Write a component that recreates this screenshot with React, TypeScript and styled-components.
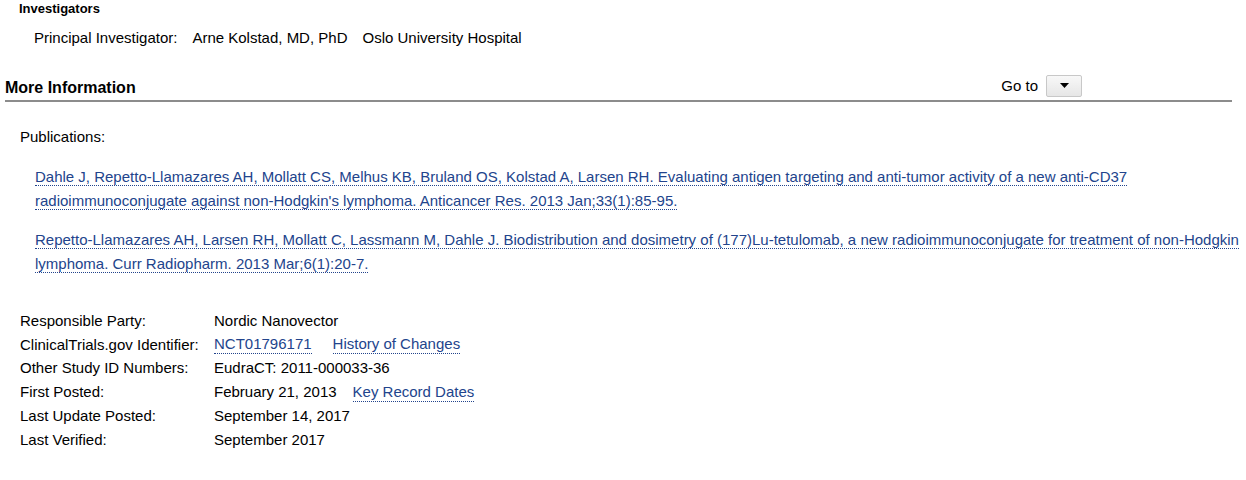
import React from "react";
import styled, { createGlobalStyle } from "styled-components";

const Global = createGlobalStyle`
  html, body { margin: 0; padding: 0; background: #fff; }
  body { font-family: "Liberation Sans", Arial, sans-serif; color: #000; }
`;

const Page = styled.div`
  width: 1246px;
  padding: 0 14px 0 5px;
  box-sizing: border-box;
`;

const SubHeading = styled.div`
  font-size: 13px;
  font-weight: bold;
  padding: 1px 0 0 14px;
  line-height: 15px;
`;

const InvestigatorRow = styled.div`
  display: flex;
  gap: 15px;
  font-size: 15px;
  line-height: 18px;
  padding: 13px 0 0 29px;
`;

const SectionHeader = styled.div`
  display: flex;
  align-items: center;
  justify-content: space-between;
  margin-top: 26px;
  height: 27px;
  border-bottom: 2px solid #8c8c8c;
`;

const SectionTitle = styled.div`
  font-size: 16px;
  font-weight: bold;
  padding-top: 2px;
`;

const GoTo = styled.div`
  display: flex;
  align-items: center;
  gap: 8px;
  font-size: 15px;
  margin-right: 150px;
  padding-bottom: 2px;
`;

const DropButton = styled.button`
  width: 36px;
  height: 22px;
  border: 1px solid #c8c8c8;
  border-radius: 2px;
  background: linear-gradient(#f8f8f8, #e6e6e6);
  display: flex;
  align-items: center;
  justify-content: center;
  padding: 0;
`;

const Body = styled.div`
  padding: 0 0 0 15px;
  font-size: 15px;
`;

const Label = styled.div`
  margin-top: 26px;
  line-height: 18px;
`;

const PubList = styled.div`
  display: flex;
  flex-direction: column;
  gap: 15px;
  padding: 19px 0 0 15px;
`;

const Link = styled.a`
  color: #22448c;
  text-decoration: none;
  border-bottom: 1px dotted #22448c;
`;

const Pub = styled.div`
  line-height: 24px;
  margin-right: -14px;
`;

const Table = styled.div`
  display: grid;
  grid-template-columns: 194px auto;
  grid-auto-rows: 23.8px;
  align-items: center;
  margin-top: 33px;
  line-height: 18px;
`;

const Value = styled.div<{ $gap?: number }>`
  display: flex;
  gap: ${(p) => p.$gap ?? 21}px;
`;

export default function App() {
  return (
    <>
      <Global />
      <Page>
        <SubHeading>Investigators</SubHeading>
        <InvestigatorRow>
          <span>Principal Investigator:</span>
          <span>Arne Kolstad, MD, PhD</span>
          <span>Oslo University Hospital</span>
        </InvestigatorRow>
        <SectionHeader>
          <SectionTitle>More Information</SectionTitle>
          <GoTo>
            <span>Go to</span>
            <DropButton aria-label="Go to">
              <svg width="9" height="5" viewBox="0 0 9 5">
                <path d="M0 0 L9 0 L4.5 5 Z" fill="#000" />
              </svg>
            </DropButton>
          </GoTo>
        </SectionHeader>
        <Body>
          <Label>Publications:</Label>
          <PubList>
            <Pub>
              <Link href="#">
                Dahle J, Repetto-Llamazares AH, Mollatt CS, Melhus KB, Bruland OS, Kolstad A, Larsen RH. Evaluating antigen targeting and anti-tumor activity of a new anti-CD37 radioimmunoconjugate against non-Hodgkin's lymphoma. Anticancer Res. 2013 Jan;33(1):85-95.
              </Link>
            </Pub>
            <Pub>
              <Link href="#">
                Repetto-Llamazares AH, Larsen RH, Mollatt C, Lassmann M, Dahle J. Biodistribution and dosimetry of (177)Lu-tetulomab, a new radioimmunoconjugate for treatment of non-Hodgkin lymphoma. Curr Radiopharm. 2013 Mar;6(1):20-7.
              </Link>
            </Pub>
          </PubList>
          <Table>
            <div>Responsible Party:</div>
            <Value>Nordic Nanovector</Value>
            <div>ClinicalTrials.gov Identifier:</div>
            <Value>
              <Link href="#">NCT01796171</Link>
              <Link href="#">History of Changes</Link>
            </Value>
            <div>Other Study ID Numbers:</div>
            <Value>EudraCT: 2011-000033-36</Value>
            <div>First Posted:</div>
            <Value $gap={16}>
              <span>February 21, 2013</span>
              <Link href="#">Key Record Dates</Link>
            </Value>
            <div>Last Update Posted:</div>
            <Value>September 14, 2017</Value>
            <div>Last Verified:</div>
            <Value>September 2017</Value>
          </Table>
        </Body>
      </Page>
    </>
  );
}
